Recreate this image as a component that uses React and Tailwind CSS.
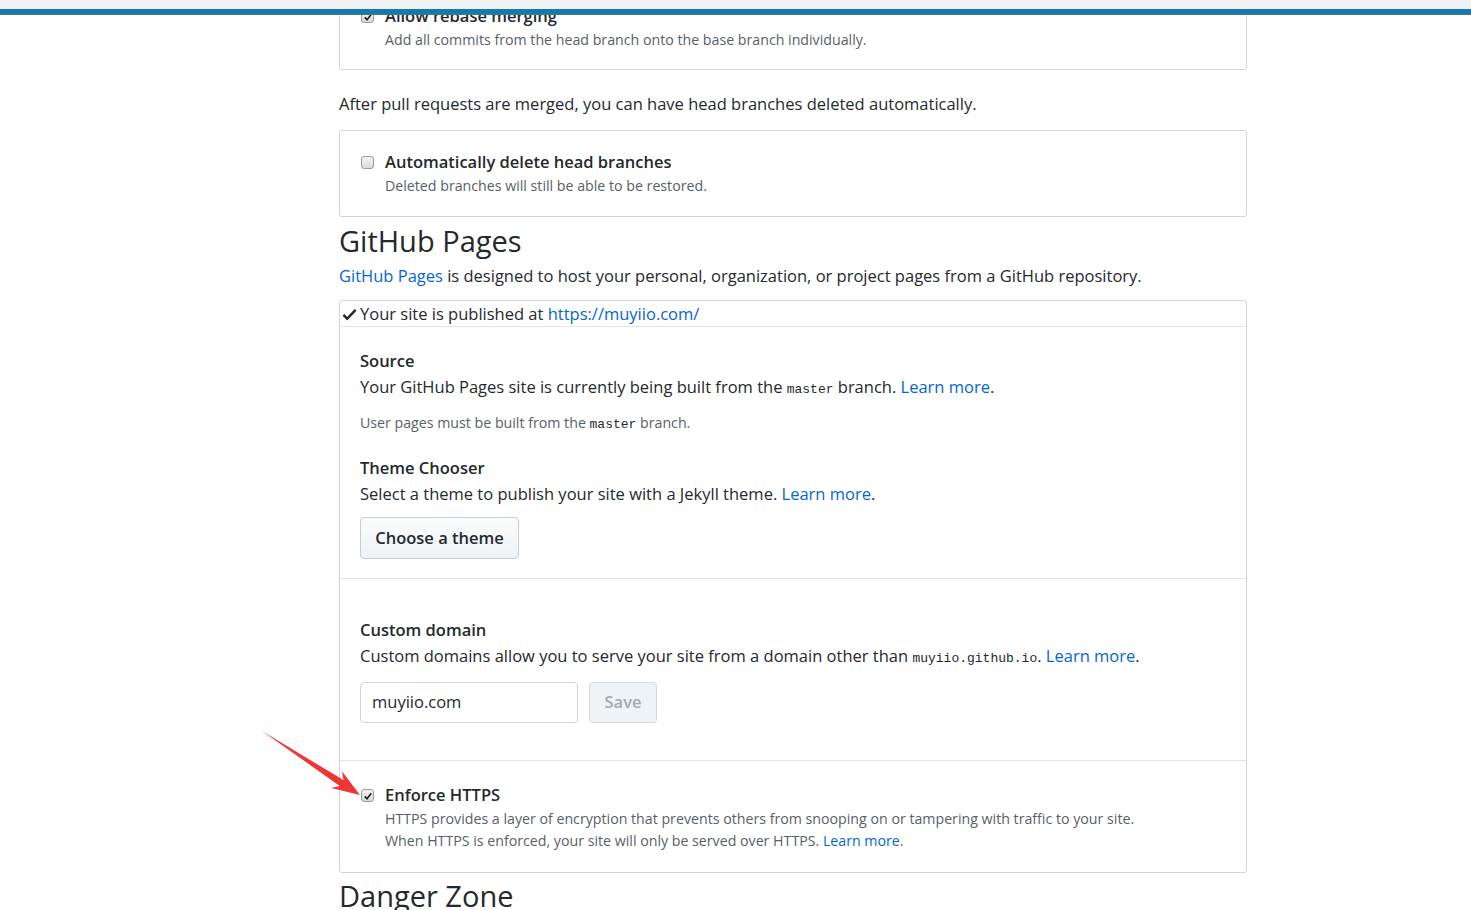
import React from "react";

const font = { fontFamily: '"Open Sans", "Noto Sans", sans-serif' };

function Checkbox({ checked }) {
  return (
    <span className="mt-[6px] flex h-[13px] w-[13px] shrink-0 items-center justify-center rounded-[3px] border border-[#9a9a9a] bg-gradient-to-b from-[#f4f4f4] to-[#d9d9d9]">
      {checked && (
        <svg viewBox="0 0 12 12" className="h-[10px] w-[10px]">
          <path d="M2 6.5 L4.8 9.2 L10 2.8" fill="none" stroke="#222" strokeWidth="2" />
        </svg>
      )}
    </span>
  );
}

function Mono({ children }) {
  return <code className="font-['Liberation_Mono',monospace] text-[13px] leading-none text-[#24292e]">{children}</code>;
}

function Link({ children }) {
  return <a className="text-[#0366d6]">{children}</a>;
}

export default function App() {
  return (
    <div style={font} className="relative h-[910px] w-full overflow-hidden bg-white text-[#24292e]">
      {/* top bars */}
      <div className="absolute left-0 top-0 z-10 w-full">
        <div className="h-[9px] bg-[#eff0f2]" />
        <div className="h-[6px] border-b border-[#3b7b93] bg-[#1679ad]" />
      </div>

      <main className="ml-[339px] w-[908px]">
        {/* merge options box (top cut off) */}
        <div className="-mt-[17px] rounded-[3px] border border-[#d1d5da] px-[21px] pb-[17px] pt-[20px]">
          <div className="flex gap-[11px]">
            <Checkbox checked />
            <div>
              <div className="text-[16.5px] font-semibold leading-[24px]">Allow rebase merging</div>
              <div className="text-[14.2px] leading-[24px] text-[#586069]">
                Add all commits from the head branch onto the base branch individually.
              </div>
            </div>
          </div>
        </div>

        <p className="mt-[22px] text-[16.5px] leading-[24px]">
          After pull requests are merged, you can have head branches deleted automatically.
        </p>

        <div className="mt-[14px] rounded-[3px] border border-[#d1d5da] px-[21px] pb-[18px] pt-[19px]">
          <div className="flex gap-[11px]">
            <Checkbox />
            <div>
              <div className="text-[16.5px] font-semibold leading-[24px]">Automatically delete head branches</div>
              <div className="text-[14.2px] leading-[24px] text-[#586069]">
                Deleted branches will still be able to be restored.
              </div>
            </div>
          </div>
        </div>

        <h2 className="mt-[6px] text-[29px] font-normal leading-[36px]">GitHub Pages</h2>
        <p className="mt-[5px] text-[16.5px] leading-[24px]">
          <Link>GitHub Pages</Link> is designed to host your personal, organization, or project pages from a GitHub
          repository.
        </p>

        <div className="mt-[12px] rounded-[3px] border border-[#d1d5da]">
          <div className="flex h-[26px] items-center gap-[3px] border-b border-[#e1e4e8] pl-[2px] pt-[2px] text-[16.5px]">
            <svg viewBox="0 0 16 16" className="h-[15px] w-[15px]">
              <path d="M1.5 8.5 L5.5 12.5 L14.5 3" fill="none" stroke="#24292e" strokeWidth="2.6" />
            </svg>
            <span>
              Your site is published at <Link>https://muyiio.com/</Link>
            </span>
          </div>

          <section className="border-b border-[#e1e4e8] px-[20px] pb-[19px] pt-[22px]">
            <div className="text-[16.5px] font-semibold leading-[24px]">Source</div>
            <p className="mt-[2px] text-[16.5px] leading-[24px]">
              Your GitHub Pages site is currently being built from the <Mono>master</Mono> branch.{" "}
              <Link>Learn more</Link>.
            </p>
            <p className="mt-[14px] text-[14.2px] leading-[20px] text-[#586069]">
              User pages must be built from the <Mono>master</Mono> branch.
            </p>

            <div className="mt-[23px] text-[16.5px] font-semibold leading-[24px]">Theme Chooser</div>
            <p className="mt-[2px] text-[16.5px] leading-[24px]">
              Select a theme to publish your site with a Jekyll theme. <Link>Learn more</Link>.
            </p>
            <button className="mt-[11px] h-[42px] w-[159px] rounded-[4px] border border-[#c9ccd0] bg-gradient-to-b from-[#fafbfc] to-[#eff3f6] text-[16.5px] font-semibold text-[#24292e]">
              Choose a theme
            </button>
          </section>

          <section className="border-b border-[#e1e4e8] px-[20px] pb-[37px] pt-[39px]">
            <div className="text-[16.5px] font-semibold leading-[24px]">Custom domain</div>
            <p className="mt-[2px] text-[16.5px] leading-[24px]">
              Custom domains allow you to serve your site from a domain other than <Mono>muyiio.github.io</Mono>.{" "}
              <Link>Learn more</Link>.
            </p>
            <div className="mt-[14px] flex gap-[11px]">
              <div className="flex h-[41px] w-[218px] items-center rounded-[4px] border border-[#d1d5da] px-[11px] text-[16.5px]">
                muyiio.com
              </div>
              <button className="h-[41px] w-[68px] rounded-[4px] border border-[#d6d9dc] bg-[#eff3f6] text-[16.5px] font-semibold text-[#a3aab1]">
                Save
              </button>
            </div>
          </section>

          <section className="px-[21px] pb-[20px] pt-[22px]">
            <div className="flex gap-[11px]">
              <Checkbox checked />
              <div>
                <div className="text-[16.5px] font-semibold leading-[24px]">Enforce HTTPS</div>
                <p className="mt-[1px] text-[14.2px] leading-[22px] text-[#586069]">
                  HTTPS provides a layer of encryption that prevents others from snooping on or tampering with traffic
                  to your site.
                  <br />
                  When HTTPS is enforced, your site will only be served over HTTPS. <Link>Learn more</Link>.
                </p>
              </div>
            </div>
          </section>
        </div>

        <h2 className="mt-[5px] text-[29px] font-normal leading-[36px]">Danger Zone</h2>
      </main>

      {/* annotation arrow */}
      <svg className="pointer-events-none absolute left-0 top-0" width="1471" height="910">
        <polygon
          points="262,731 343.5,780.1 342,771.3 360,795 331,788.1 339.7,785.9"
          fill="#ee3636"
        />
      </svg>
    </div>
  );
}
